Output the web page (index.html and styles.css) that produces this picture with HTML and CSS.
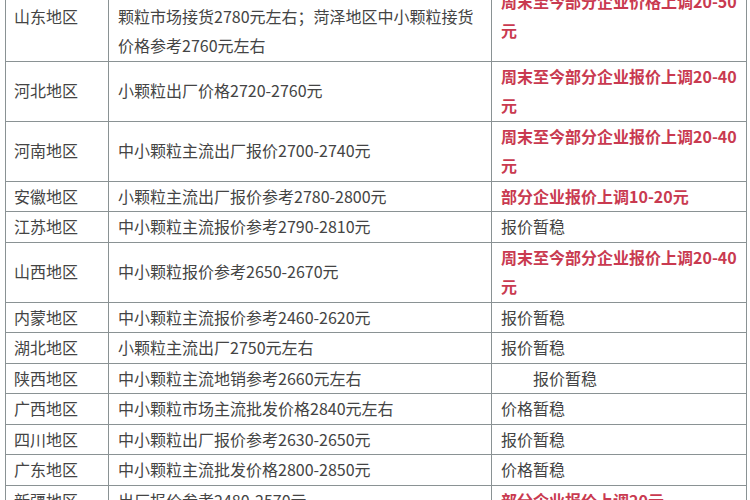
FILE: index.html
```html
<!DOCTYPE html>
<html lang="zh-CN">
<head>
<meta charset="utf-8">
<title>尿素价格</title>
<link rel="stylesheet" href="styles.css">
</head>
<body>
<div class="sheet">
<table class="prices">
  <colgroup>
    <col class="c-region">
    <col class="c-price">
    <col class="c-trend">
  </colgroup>
  <tbody>
    <tr>
      <td>山东地区</td>
      <td>临沂地区中小颗粒出厂2750元左右；聊城中小<br>颗粒市场接货2780元左右；菏泽地区中小颗粒接货<br>价格参考2760元左右</td>
      <td class="up">周末至今部分企业价格上调20-50元</td>
    </tr>
    <tr>
      <td>河北地区</td>
      <td>小颗粒出厂价格2720-2760元</td>
      <td class="up">周末至今部分企业报价上调20-40元</td>
    </tr>
    <tr>
      <td>河南地区</td>
      <td>中小颗粒主流出厂报价2700-2740元</td>
      <td class="up">周末至今部分企业报价上调20-40元</td>
    </tr>
    <tr>
      <td>安徽地区</td>
      <td>小颗粒主流出厂报价参考2780-2800元</td>
      <td class="up">部分企业报价上调10-20元</td>
    </tr>
    <tr>
      <td>江苏地区</td>
      <td>中小颗粒主流报价参考2790-2810元</td>
      <td>报价暂稳</td>
    </tr>
    <tr>
      <td>山西地区</td>
      <td>中小颗粒报价参考2650-2670元</td>
      <td class="up">周末至今部分企业报价上调20-40元</td>
    </tr>
    <tr>
      <td>内蒙地区</td>
      <td>中小颗粒主流报价参考2460-2620元</td>
      <td>报价暂稳</td>
    </tr>
    <tr>
      <td>湖北地区</td>
      <td>小颗粒主流出厂2750元左右</td>
      <td>报价暂稳</td>
    </tr>
    <tr>
      <td>陕西地区</td>
      <td>中小颗粒主流地销参考2660元左右</td>
      <td class="indent">报价暂稳</td>
    </tr>
    <tr>
      <td>广西地区</td>
      <td>中小颗粒市场主流批发价格2840元左右</td>
      <td>价格暂稳</td>
    </tr>
    <tr>
      <td>四川地区</td>
      <td>中小颗粒出厂报价参考2630-2650元</td>
      <td>报价暂稳</td>
    </tr>
    <tr>
      <td>广东地区</td>
      <td>中小颗粒主流批发价格2800-2850元</td>
      <td>价格暂稳</td>
    </tr>
    <tr>
      <td>新疆地区</td>
      <td>出厂报价参考2480-2570元</td>
      <td class="up">部分企业报价上调20元</td>
    </tr>
  </tbody>
</table>
</div>
</body>
</html>
```

FILE: styles.css
```css
html, body {
  margin: 0;
  padding: 0;
  background: #ffffff;
  overflow: hidden;
}

.sheet {
  padding-left: 5px;
  font-family: "Noto Sans CJK SC", "Noto Sans", sans-serif;
  font-size: 16px;
  color: #444444;
}

.prices {
  width: 741px;
  margin-top: -29px;
  table-layout: fixed;
  border-collapse: collapse;
}

.c-region { width: 103px; }
.c-price { width: 383px; }
.c-trend { width: 255px; }

.prices td {
  border: 1px solid #8a9294;
  line-height: 29.5px;
  padding: 0 6px 0 8px;
  vertical-align: middle;
  text-align: left;
}

.prices td + td {
  padding-left: 9px;
}

.prices td.up {
  color: #c93a50;
  font-weight: bold;
}

.prices td.indent {
  text-indent: 2em;
}
```
